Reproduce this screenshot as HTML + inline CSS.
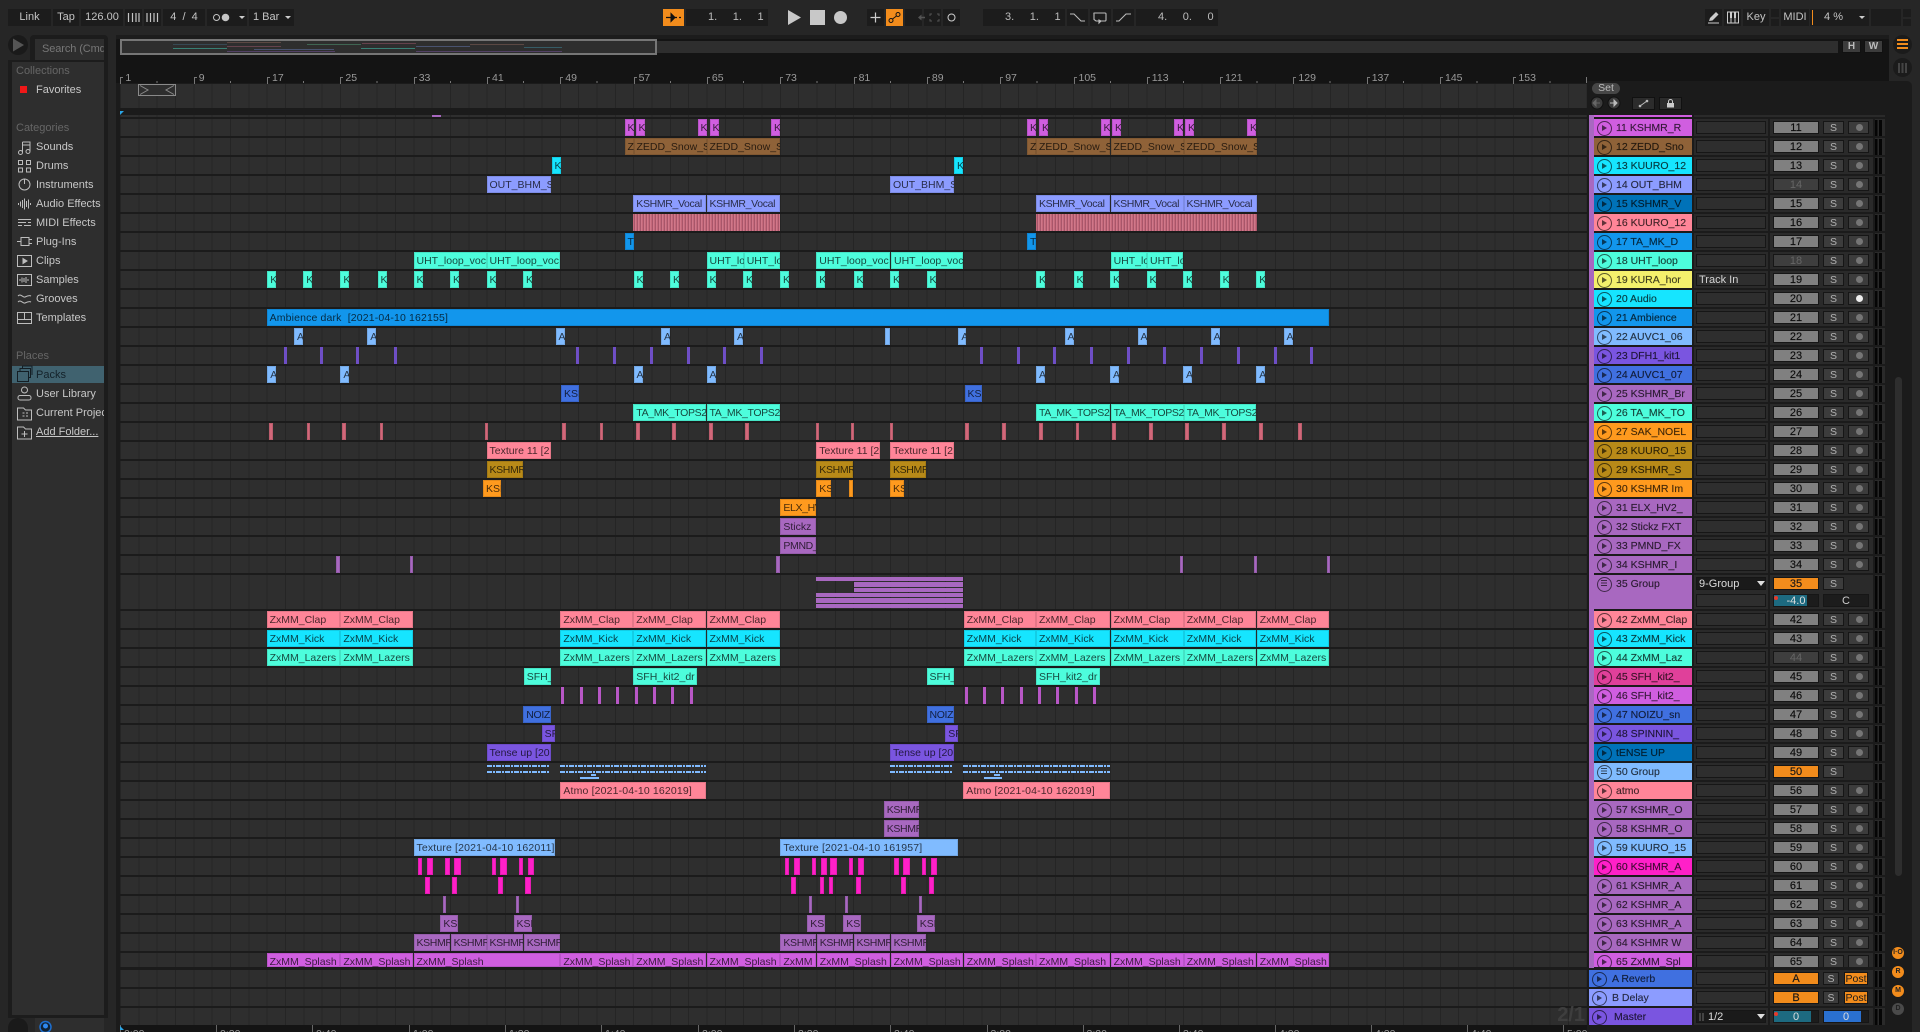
<!DOCTYPE html>
<html><head><meta charset="utf-8"><title>Live Arrangement</title>
<style>
*{margin:0;padding:0;box-sizing:border-box}
html{width:1920px;height:1032px;overflow:hidden;background:#262626}
body{position:relative;width:1920px;height:1032px;overflow:hidden;background:#262626;font-family:"Liberation Sans",sans-serif;font-size:11px;color:#ccc}
div,span,svg{position:absolute}
.tb{top:9px;height:17px;background:#1c1c1c;color:#c4c4c4;text-align:center;line-height:17px;font-size:11px}
.tb.o{background:#f28c1c}
.num{text-align:left;word-spacing:12.5px;color:#bcbcbc;padding-left:22px!important}
.tri{position:absolute;width:0;height:0;border-left:3px solid transparent;border-right:3px solid transparent;border-top:3px solid #ccc;top:7px}
.sb{left:36px;color:#c8c8c8;font-size:11px;line-height:14px;white-space:nowrap}
.sh{left:16px;color:#666;font-size:11px;line-height:14px}
.r{left:120px;width:1467px;height:17px;background:repeating-linear-gradient(90deg,#252525 0,#252525 1px,#2e2e2e 1px,#2e2e2e 18.33px)}
i{position:absolute;top:0;height:100%;overflow:hidden;padding:1px 0 0 3px;font:normal 10.5px/17px "Liberation Sans",sans-serif;color:rgba(0,0,0,.72);white-space:pre;box-shadow:inset 0 0 0 1px rgba(0,0,0,.1)}
.q i{letter-spacing:-.35px}
.dt i{letter-spacing:.15px}
.th i{width:1.5px!important;opacity:.85;box-shadow:none}
.m{background:#d05ee0}.b{background:#8f6238}.c{background:#16e5ff}.v{background:#8c9cff}.s{background:#1296ec}.t{background:#4dfddc}.p{background:#80bbff}.u{background:#7a55e0}.n{background:#4070e0}.k{background:#ff8598}.o{background:#ff9a1e}.g{background:#b88a18}.a{background:#a868c0}.f{background:#ff20c8}.d{background:#0072b8}.y{background:#f4f06c}.e{background:#e0409a}
.tk{background:#d2687a}
.w{background:repeating-linear-gradient(90deg,#c4687a 0,#c4687a 1px,#a8566a 1px,#a8566a 2px,#d0788a 2px,#d0788a 3px);box-shadow:none}
.ds{position:absolute;height:2px;background:repeating-linear-gradient(90deg,#7fbaff 0,#7fbaff 5px,transparent 5px,transparent 6px,#7fbaff 6px,#7fbaff 8px,transparent 8px,transparent 9px)}
.pb{position:absolute;height:4.4px;background:#a868c0;left:696.3px;width:146.7px}
.h{left:1589px;width:296px;height:17px;overflow:hidden;background:linear-gradient(90deg,transparent 105px,#2a2a2a 105px,#2a2a2a 179px,transparent 179px,transparent 181px,#2a2a2a 181px,#2a2a2a 284px,transparent 284px,transparent 286px,#2a2a2a 286px)}
b{position:absolute;left:5px;top:0;width:98px;height:100%;font:normal 10.5px/17px "Liberation Sans",sans-serif;padding:1px 0 0 22px;color:rgba(0,0,0,.72);-webkit-text-stroke:.2px rgba(0,0,0,.5);white-space:pre;overflow:hidden}
b::before{content:"";position:absolute;left:3px;top:2px;width:13px;height:13px;border:1.2px solid rgba(0,0,0,.62);border-radius:50%}
b::after{content:"";position:absolute;left:8px;top:5.5px;width:0;height:0;border-left:5px solid rgba(0,0,0,.62);border-top:3px solid transparent;border-bottom:3px solid transparent}
b.gr::after{left:6.5px;top:5px;width:6px;height:1px;border:0;background:rgba(0,0,0,.62);box-shadow:0 2.5px 0 rgba(0,0,0,.62),0 5px 0 rgba(0,0,0,.62)}
b.x{left:0;width:103px;padding-left:23px}
s{position:absolute;left:107px;top:2px;width:70px;height:13px;background:#2e2e2e;border:1px solid #161616;text-decoration:none;font-size:11px;line-height:12px;padding-left:2px;color:#d4d4d4;white-space:pre}
em{position:absolute;left:184px;top:2px;width:46px;height:13px;background:#808080;border:1px solid #161616;font:normal 11px/12px "Liberation Sans",sans-serif;color:#0c0c0c;text-align:center;-webkit-text-stroke:.15px #0c0c0c}
em.dm{background:#3e3e3e;color:#666;-webkit-text-stroke:0}
em.or{background:#f28c1c;color:#1a1a1a}
u{position:absolute;left:234px;top:2px;width:21px;height:13px;background:#3c3c3c;border:1px solid #161616;text-decoration:none;font-size:10.5px;line-height:12px;color:#b0b0b0;text-align:center}
a{position:absolute;left:259px;top:2px;width:21px;height:13px;background:#3c3c3c;border:1px solid #161616}
a::after{content:"";position:absolute;left:6.5px;top:2px;width:7px;height:7px;border-radius:50%;background:#757575}
a.on::after{background:#eee}
tt{position:absolute;left:286px;top:1px;bottom:0;width:7px;background:linear-gradient(90deg,#050505 0,#050505 2.5px,transparent 2.5px,transparent 4px,#050505 4px,#050505 6.7px)}
.bn{top:73px;color:#9a9a9a;font-size:10.5px;line-height:10px;padding-left:5px}
.bn::before{content:"";position:absolute;left:0;top:4px;width:2px;height:6px;border-left:1px solid #777;border-top:1px solid #777}
.tm{top:1025px;height:7px;overflow:hidden;color:#9a9a9a;font-size:10.5px;line-height:12px;padding:3px 0 0 3px;border-left:1px solid #666}
.ov{height:1px;opacity:.6}
.cb{border-radius:50%}
</style></head><body>

<!-- transport -->
<div class="tb" style="left:8px;width:43px">Link</div>
<div class="tb" style="left:53px;width:26px">Tap</div>
<div class="tb" style="left:81px;width:42px">126.00</div>
<div class="tb" style="left:125px;width:17px"></div>
<div class="tb" style="left:144px;width:17px"></div>
<div class="tb" style="left:163px;width:42px;word-spacing:3px">4 / 4</div>
<div class="tb" style="left:207px;width:40px"><span class="tri" style="left:32px"></span></div>
<div class="tb" style="left:249px;width:45px;text-align:left;padding-left:4px">1 Bar<span class="tri" style="left:36px"></span></div>
<svg style="left:0;top:0" width="300" height="30" fill="none" stroke="#c4c4c4"><path d="M128.5 13v9M132.5 13v9M136 13v9M139 13v9M147 13v9M150.5 13v9M154 13v9M157.5 13v9" stroke-width="1.2"/><circle cx="216.5" cy="17.5" r="3"/><circle cx="225.5" cy="17.5" r="3.3" fill="#c4c4c4"/></svg>

<div class="tb o" style="left:663px;width:21px"></div>
<svg style="left:663px;top:9px" width="21" height="17" fill="none" stroke="#111"><path d="M3 8.5h5M12 8.5h2M16 8.5h2" stroke-width="1.3"/><path d="M8 4.5l4 4-4 4z" fill="#111"/></svg>
<div class="tb num" style="left:686px;width:82px">1. 1. 1</div>
<svg style="left:780px;top:5px" width="190" height="24"><path d="M8 5l13 7.5L8 20z" fill="#c8c8c8"/><rect x="30" y="5" width="15" height="15" fill="#c8c8c8"/><circle cx="60.5" cy="12.5" r="6.5" fill="#c8c8c8"/></svg>
<div class="tb" style="left:867px;width:17px"></div>
<div class="tb o" style="left:886px;width:17px"></div>
<div class="tb" style="left:905px;width:17px"></div>
<div class="tb" style="left:924px;width:17px"></div>
<div class="tb" style="left:943px;width:17px"></div>
<svg style="left:860px;top:9px" width="110" height="17" fill="none"><path d="M15.500 3.500v10M10.500 8.500h10" stroke="#ccc" stroke-width="1.2"/><g stroke="#111"><circle cx="31" cy="11.500" r="2"/><circle cx="38" cy="5.500" r="2"/><path d="M32.500 10l4-3"/></g><path d="M59 8.500h6" stroke="#555" stroke-width="1.5"/><path d="M58 8.500l3.500-3v6z" fill="#555"/><path d="M69 7V5h2M76 5h2v2M78 10v2h-2M71 12h-2v-2" stroke="#555" transform="translate(1)"/><circle cx="91.500" cy="8.500" r="3.500" stroke="#ccc" stroke-width="1"/></svg>
<div class="tb num" style="left:983px;width:82px">3. 1. 1</div>
<div class="tb" style="left:1067px;width:21px"></div>
<div class="tb" style="left:1090px;width:21px"></div>
<div class="tb" style="left:1113px;width:21px"></div>
<svg style="left:1067px;top:9px" width="70" height="17" fill="none" stroke="#bbb" stroke-width="1.100"><path d="M3 5h4l7 7h4"/><path d="M27 4h11a1 1 0 0 1 1 1v6a1 1 0 0 1-1 1h-9l-2-1.500V5a1 1 0 0 1 0-1z"/><path d="M34 12l-2 2v-3z" fill="#bbb"/><path d="M49 12h3l7-7h5"/></svg>
<div class="tb num" style="left:1136px;width:82px">4. 0. 0</div>

<div class="tb" style="left:1705px;width:17px"></div>
<div class="tb" style="left:1724px;width:17px"></div>
<svg style="left:1705px;top:9px" width="37" height="17"><path d="M4 12l1-3 6-6 2.500 2.500-6 6z" fill="#ccc"/><path d="M3 14h11" stroke="#ccc"/><rect x="22.500" y="3" width="11" height="11" fill="none" stroke="#ccc"/><path d="M26 3v11M30 3v11" stroke="#ccc"/><path d="M25 3h2v6h-2zM29 3h2v6h-2z" fill="#ccc"/></svg>
<div class="tb" style="left:1743px;width:26px">Key</div>
<div class="tb" style="left:1771px;width:8px;height:7.500px"></div>
<div class="tb" style="left:1771px;top:18.500px;width:8px;height:7.500px"></div>
<div class="tb" style="left:1781px;width:28px">MIDI</div>
<div class="tb" style="left:1810px;width:59px;padding-right:12px">4 %<span style="left:2px;top:1px;width:1px;height:15px;background:#f28c1c"></span><span class="tri" style="left:49px"></span></div>
<div class="tb" style="left:1871px;width:30px"></div>
<div class="tb" style="left:1903px;width:8px;height:7.500px"></div>
<div class="tb" style="left:1903px;top:18.500px;width:8px;height:7.500px"></div>

<!-- left column -->
<div style="left:8px;top:35px;width:20px;height:20px;border-radius:50%;background:#1a1a1a"></div>
<svg style="left:8px;top:35px" width="20" height="20"><path d="M5 3.500l11 6.500L5 16.500z" fill="#555"/></svg>
<div style="left:30px;top:35px;width:78px;height:27px;background:#1c1c1c;border-radius:4px 4px 0 0"></div>
<div style="left:35px;top:39px;width:69px;height:21px;background:#2e2e2e;color:#777;line-height:21px;padding-left:7px;overflow:hidden;white-space:pre;letter-spacing:-.1px">Search (Cmd + F)</div>
<div style="left:8px;top:60px;width:100px;height:958px;background:#1c1c1c"></div>
<div style="left:12px;top:62px;width:92px;height:953px;background:#2e2e2e"></div>
<div style="left:8px;top:1018px;width:20px;height:14px;border-radius:10px 10px 0 0;background:#1a1a1a"></div>
<div style="left:35px;top:1018px;width:69px;height:14px;background:#2e2e2e"></div>
<svg style="left:38px;top:1020px" width="16" height="12"><circle cx="7.500" cy="7" r="5.500" fill="#123" stroke="#1d6fd0" stroke-width="1.500"/><circle cx="7.500" cy="6" r="2.500" fill="#2e88ee"/></svg>
<div class="sh" style="top:64px">Collections</div>
<div style="left:20px;top:86px;width:7px;height:7px;background:#f01818"></div>
<div class="sb" style="top:83px">Favorites</div>
<div class="sh" style="top:121px">Categories</div>
<div class="sb" style="top:140px">Sounds</div>
<div class="sb" style="top:159px">Drums</div>
<div class="sb" style="top:178px">Instruments</div>
<div class="sb" style="top:197px">Audio Effects</div>
<div class="sb" style="top:216px">MIDI Effects</div>
<div class="sb" style="top:235px">Plug-Ins</div>
<div class="sb" style="top:254px">Clips</div>
<div class="sb" style="top:273px">Samples</div>
<div class="sb" style="top:292px">Grooves</div>
<div class="sb" style="top:311px">Templates</div>
<div class="sh" style="top:349px">Places</div>
<div style="left:12px;top:366px;width:92px;height:17px;background:#40626f"></div>
<div class="sb" style="top:368px;color:#14222a">Packs</div>
<div class="sb" style="top:387px">User Library</div>
<div class="sb" style="top:406px;width:68px;overflow:hidden">Current Project</div>
<div class="sb" style="top:425px;text-decoration:underline">Add Folder...</div>
<svg style="left:0;top:0" width="110" height="450" fill="none" stroke="#bdbdbd" stroke-width="1">
<path d="M22.500 142h7.500v9M22.500 142v10M22.500 145h7.500"/><circle cx="20.500" cy="152.500" r="2"/><circle cx="28" cy="151.500" r="2"/>
<path d="M18.500 160.500h4v4h-4zM26.500 160.500h4v4h-4zM18.500 168h4v4h-4zM26.500 168h4v4h-4z"/>
<circle cx="24.500" cy="184.500" r="5.500"/><path d="M24.500 179v5"/>
<path d="M18.500 203v2M20.500 201.500v5M22.500 200v8M24.500 198.500v11M26.500 201v6M28.500 199.500v9M30.500 203v2"/>
<path d="M18 219.500h13M18 222.500h8M28 222.500h3M18 225.500h4M24 225.500h7"/>
<path d="M17 241.500h4M21 237.500h8v8h-8zM29 239.500h3M29 243.500h3"/>
<rect x="17.500" y="255.500" width="14" height="11"/><path d="M23 258.500l4 2.500-4 2.500z" fill="#bdbdbd"/>
<rect x="17.500" y="274.500" width="14" height="11"/><path d="M20 279v2M22 277.500v5M24 278v4M26 277v6M28 279v2"/>
<path d="M18 296c3-3 5 2 7 1s4-2 6-1M18 302c3-3 5 2 7 1s4-2 6-1"/>
<rect x="17.500" y="312.500" width="14" height="11"/><path d="M17.500 319.500h14M24.500 312.500v7"/>
<rect x="17.500" y="371.500" width="11" height="10" stroke="#141e24"/><path d="M20 371v-2.500h10.500v9H29M22.500 368v-2h9.500v9" stroke="#141e24"/>
<circle cx="24.500" cy="390" r="3"/><rect x="18" y="395.500" width="13" height="4.500" rx="2"/>
<path d="M17.500 410v-2h6l2 2h6v10h-14z"/><path d="M22.500 413h2M26 413h2M22.500 416h2M26 416h2"/>
<path d="M17.500 429v-2h6l2 2h6v10h-14z"/><path d="M24.500 431v6M21.500 434h6"/>
</svg>

<!-- main panel -->
<div style="left:116px;top:35px;width:1773px;height:48px;background:#141414;border-radius:5px 5px 0 0"></div>
<div style="left:1587px;top:81px;width:325px;height:951px;background:#1b1b1b;border-radius:0 5px 0 0"></div>
<div style="left:116px;top:83px;width:1471px;height:949px;background:#1b1b1b"></div>
<div style="left:116px;top:35px;width:1773px;height:4px;background:#1c1c1c"></div>
<div style="left:120px;top:41px;width:1718px;height:12px;background:#2e2e2e"></div>
<div class="ov" style="left:173px;top:48px;width:54px;background:#3fb8a4"></div>
<div class="ov" style="left:173px;top:44px;width:54px;background:#3c5c6c"></div>
<div class="ov" style="left:227px;top:42px;width:54px;background:#7a5a52"></div>
<div class="ov" style="left:227px;top:46px;width:54px;background:#8a5060"></div>
<div class="ov" style="left:227px;top:51px;width:108px;background:#6c4e8c"></div>
<div class="ov" style="left:254px;top:49px;width:80px;background:#5c6c9c"></div>
<div class="ov" style="left:307px;top:44px;width:54px;background:#4b8a6a"></div>
<div class="ov" style="left:361px;top:48px;width:54px;background:#3fb8a4"></div>
<div class="ov" style="left:362px;top:43px;width:54px;background:#8a5060"></div>
<div class="ov" style="left:416px;top:46px;width:54px;background:#5c6c9c"></div>
<div class="ov" style="left:416px;top:51px;width:146px;background:#6c4e8c"></div>
<div class="ov" style="left:470px;top:44px;width:54px;background:#7a5a52"></div>
<div class="ov" style="left:524px;top:47px;width:38px;background:#3c7c8c"></div>
<div style="left:120px;top:39px;width:537px;height:16px;border:2px solid #767676"></div>
<div style="left:1842px;top:40px;width:19px;height:13px;background:#3c3c3c;border:1px solid #111;color:#bbb;font-weight:bold;font-size:10px;line-height:11px;text-align:center">H</div>
<div style="left:1864px;top:40px;width:19px;height:13px;background:#3c3c3c;border:1px solid #111;color:#bbb;font-weight:bold;font-size:10px;line-height:11px;text-align:center">W</div>
<div class="cb" style="left:1893px;top:35px;width:19px;height:19px;background:#1b1b1b"></div>
<div style="left:1897px;top:39px;width:11px;height:2px;background:#f28c1c;box-shadow:0 4px 0 #f28c1c,0 8px 0 #f28c1c"></div>
<div class="cb" style="left:1893px;top:58px;width:19px;height:19px;background:#1b1b1b"></div>
<div style="left:1898px;top:63px;width:2px;height:10px;background:#444;box-shadow:3.500px 0 0 #444,7px 0 0 #444"></div>

<!-- bar ruler -->
<span class="bn" style="left:120.400px">1</span><span class="bn" style="left:193.700px">9</span><span class="bn" style="left:267px">17</span><span class="bn" style="left:340.400px">25</span><span class="bn" style="left:413.700px">33</span><span class="bn" style="left:487px">41</span><span class="bn" style="left:560.300px">49</span><span class="bn" style="left:633.600px">57</span><span class="bn" style="left:706.900px">65</span><span class="bn" style="left:780.200px">73</span><span class="bn" style="left:853.600px">81</span><span class="bn" style="left:926.900px">89</span><span class="bn" style="left:1000.200px">97</span><span class="bn" style="left:1073.500px">105</span><span class="bn" style="left:1146.800px">113</span><span class="bn" style="left:1220.100px">121</span><span class="bn" style="left:1293.400px">129</span><span class="bn" style="left:1366.700px">137</span><span class="bn" style="left:1440px">145</span><span class="bn" style="left:1513.400px">153</span>
<div style="left:120px;top:81px;width:1467px;height:2px;background:repeating-linear-gradient(90deg,transparent 0,transparent 36.600px,#777 36.600px,#777 37.600px,transparent 37.600px,transparent 73.320px)"></div>
<div style="left:1586px;top:77px;width:1px;height:6px;background:#777"></div>
<div class="r" style="top:84px;height:24px"></div>
<svg style="left:138px;top:84px" width="39" height="12" fill="none" stroke="#8a8a8a"><rect x=".5" y=".5" width="37" height="11" fill="#2e2e2e"/><path d="M2 1.500l8 4.500-8 4.500M36 1.500l-8 4.500 8 4.500"/></svg>
<svg style="left:120px;top:111px" width="6" height="6"><path d="M0 0h4L0 4z" fill="#2aa6e8"/></svg>
<div class="r" style="top:115px;height:2px"></div>
<div style="left:432px;top:115px;width:9px;height:2px;background:#a868c0"></div>

<!-- rows -->
<div class="r" style="top:119px"><i class="m" style="left:504.500px;width:9px">K</i><i class="m" style="left:515.500px;width:9px">K</i><i class="m" style="left:577.500px;width:9px">K</i><i class="m" style="left:589.500px;width:9px">K</i><i class="m" style="left:651px;width:9px">K</i><i class="m" style="left:907px;width:9px">K</i><i class="m" style="left:919px;width:9px">K</i><i class="m" style="left:980.500px;width:9px">K</i><i class="m" style="left:992px;width:9px">K</i><i class="m" style="left:1054px;width:9px">K</i><i class="m" style="left:1065px;width:9px">K</i><i class="m" style="left:1127px;width:9px">K</i></div>
<div class="r" style="top:138px"><i class="b" style="left:504.500px;width:9px">Z</i><i class="b" style="left:513.500px;width:73px">ZEDD_Snow_S</i><i class="b" style="left:586.500px;width:73px">ZEDD_Snow_S</i><i class="b" style="left:907px;width:9px">Z</i><i class="b" style="left:916px;width:74px">ZEDD_Snow_S</i><i class="b" style="left:990.500px;width:73px">ZEDD_Snow_S</i><i class="b" style="left:1063.500px;width:73px">ZEDD_Snow_S</i></div>
<div class="r" style="top:157px"><i class="c" style="left:431.500px;width:9px">K</i><i class="c" style="left:834px;width:9px">K</i></div>
<div class="r" style="top:176px"><i class="v" style="left:366.500px;width:64.500px">OUT_BHM_S</i><i class="v" style="left:770px;width:64px">OUT_BHM_S</i></div>
<div class="r q" style="top:195px"><i class="v" style="left:513.300px;width:73px">KSHMR_Vocal</i><i class="v" style="left:586.500px;width:73px">KSHMR_Vocal</i><i class="v" style="left:916px;width:74px">KSHMR_Vocal</i><i class="v" style="left:990.500px;width:73px">KSHMR_Vocal</i><i class="v" style="left:1063.500px;width:73px">KSHMR_Vocal</i></div>
<div class="r" style="top:214px"><i class="w" style="left:513.300px;width:146.700px"></i><i class="w" style="left:916px;width:220.500px"></i></div>
<div class="r" style="top:233px"><i class="s" style="left:504.500px;width:9px">T</i><i class="s" style="left:907px;width:9px">T</i></div>
<div class="r" style="top:252px"><i class="t" style="left:293.500px;width:73px">UHT_loop_voc</i><i class="t" style="left:366.500px;width:73.500px">UHT_loop_voc</i><i class="t" style="left:586.500px;width:37px">UHT_lo</i><i class="t" style="left:623.700px;width:36.300px">UHT_lo</i><i class="t" style="left:696.300px;width:73.800px">UHT_loop_voc</i><i class="t" style="left:771px;width:72px">UHT_loop_voc</i><i class="t" style="left:990.600px;width:36.400px">UHT_lo</i><i class="t" style="left:1027px;width:36px">UHT_lo</i></div>
<div class="r" style="top:271px"><i class="t" style="left:147.300px;width:9px">K</i><i class="t" style="left:183.300px;width:9px">K</i><i class="t" style="left:220.400px;width:9px">K</i><i class="t" style="left:257.500px;width:9px">K</i><i class="t" style="left:293.500px;width:9px">K</i><i class="t" style="left:330px;width:9px">K</i><i class="t" style="left:366.500px;width:9px">K</i><i class="t" style="left:403px;width:9px">K</i><i class="t" style="left:513.500px;width:9px">K</i><i class="t" style="left:550px;width:9px">K</i><i class="t" style="left:586.500px;width:9px">K</i><i class="t" style="left:623px;width:9px">K</i><i class="t" style="left:660px;width:9px">K</i><i class="t" style="left:696.300px;width:9px">K</i><i class="t" style="left:733.500px;width:9px">K</i><i class="t" style="left:770px;width:9px">K</i><i class="t" style="left:806.500px;width:9px">K</i><i class="t" style="left:916px;width:9px">K</i><i class="t" style="left:953.500px;width:9px">K</i><i class="t" style="left:990px;width:9px">K</i><i class="t" style="left:1026.500px;width:9px">K</i><i class="t" style="left:1063px;width:9px">K</i><i class="t" style="left:1099.600px;width:9px">K</i><i class="t" style="left:1136.300px;width:9px">K</i></div>
<div class="r" style="top:290px"></div>
<div class="r dt" style="top:309px"><i class="s" style="left:146.600px;width:1062px">Ambience dark  [2021-04-10 162155]</i></div>
<div class="r" style="top:328px"><i class="p" style="left:174px;width:9px">A</i><i class="p" style="left:247.300px;width:9px">A</i><i class="p" style="left:435.500px;width:9px">A</i><i class="p" style="left:541px;width:9px">A</i><i class="p" style="left:614px;width:9px">A</i><i class="p" style="left:765.300px;width:4.500px"></i><i class="p" style="left:838.400px;width:8px">A</i><i class="p" style="left:944.500px;width:9px">A</i><i class="p" style="left:1017.500px;width:9px">A</i><i class="p" style="left:1090.600px;width:9px">A</i><i class="p" style="left:1163.500px;width:9px">A</i></div>
<div class="r th" style="top:347px"><i class="u" style="left:163.700px;width:2px"></i><i class="u" style="left:200px;width:2px"></i><i class="u" style="left:236.300px;width:2px"></i><i class="u" style="left:274px;width:2px"></i><i class="u" style="left:456.300px;width:1px"></i><i class="u" style="left:493px;width:2px"></i><i class="u" style="left:529.800px;width:2px"></i><i class="u" style="left:567px;width:2px"></i><i class="u" style="left:603px;width:2px"></i><i class="u" style="left:640px;width:2px"></i><i class="u" style="left:859.600px;width:1px"></i><i class="u" style="left:896.700px;width:2px"></i><i class="u" style="left:933px;width:2px"></i><i class="u" style="left:970px;width:2px"></i><i class="u" style="left:1007px;width:2px"></i><i class="u" style="left:1043px;width:2px"></i><i class="u" style="left:1080px;width:2px"></i><i class="u" style="left:1116.700px;width:2px"></i><i class="u" style="left:1153.500px;width:2px"></i><i class="u" style="left:1190px;width:2px"></i></div>
<div class="r" style="top:366px"><i class="p" style="left:147.300px;width:9px">A</i><i class="p" style="left:220.400px;width:9px">A</i><i class="p" style="left:513.500px;width:9px">A</i><i class="p" style="left:586.500px;width:9px">A</i><i class="p" style="left:916px;width:9px">A</i><i class="p" style="left:990px;width:9px">A</i><i class="p" style="left:1063px;width:9px">A</i><i class="p" style="left:1136.300px;width:9px">A</i></div>
<div class="r" style="top:385px"><i class="n" style="left:441px;width:18px">KSH</i><i class="n" style="left:844.500px;width:17.500px">KSH</i></div>
<div class="r q" style="top:404px"><i class="t" style="left:513.300px;width:73px">TA_MK_TOPS2</i><i class="t" style="left:586.500px;width:73px">TA_MK_TOPS2</i><i class="t" style="left:916px;width:74px">TA_MK_TOPS2</i><i class="t" style="left:990.600px;width:73px">TA_MK_TOPS2</i><i class="t" style="left:1063.700px;width:72.500px">TA_MK_TOPS2</i></div>
<div class="r" style="top:423px"><i class="tk" style="left:149.400px;width:3.700px"></i><i class="tk" style="left:186.500px;width:3.300px"></i><i class="tk" style="left:222.400px;width:3.700px"></i><i class="tk" style="left:259.600px;width:3.300px"></i><i class="tk" style="left:364.500px;width:3.700px"></i><i class="tk" style="left:442.400px;width:3.700px"></i><i class="tk" style="left:479.600px;width:3.300px"></i><i class="tk" style="left:515.500px;width:4px"></i><i class="tk" style="left:552.200px;width:3.700px"></i><i class="tk" style="left:589.400px;width:3.700px"></i><i class="tk" style="left:625.300px;width:3.700px"></i><i class="tk" style="left:696.300px;width:1.600px"></i><i class="tk" style="left:731.400px;width:1.300px"></i><i class="tk" style="left:770.200px;width:1px"></i><i class="tk" style="left:845.300px;width:3.700px"></i><i class="tk" style="left:882.400px;width:3.700px"></i><i class="tk" style="left:919px;width:3.700px"></i><i class="tk" style="left:955.500px;width:3.700px"></i><i class="tk" style="left:992.200px;width:3.700px"></i><i class="tk" style="left:1029px;width:4px"></i><i class="tk" style="left:1065.300px;width:3.700px"></i><i class="tk" style="left:1102.400px;width:3.700px"></i><i class="tk" style="left:1138.800px;width:4px"></i><i class="tk" style="left:1178px;width:3.700px"></i></div>
<div class="r" style="top:442px"><i class="k" style="left:366.500px;width:64.500px">Texture 11 [2</i><i class="k" style="left:696.300px;width:63.700px">Texture 11 [2</i><i class="k" style="left:770px;width:64px">Texture 11 [2</i></div>
<div class="r q" style="top:461px"><i class="g" style="left:366.500px;width:36.300px">KSHMR</i><i class="g" style="left:696.300px;width:36.700px">KSHMR</i><i class="g" style="left:770px;width:36px">KSHMR</i></div>
<div class="r" style="top:480px"><i class="o" style="left:363px;width:17.800px">KSH</i><i class="o" style="left:696.300px;width:14.700px">KS</i><i class="o" style="left:729.400px;width:3.600px"></i><i class="o" style="left:770px;width:14px">KS</i></div>
<div class="r q" style="top:499px"><i class="o" style="left:660.400px;width:35.600px">ELX_HV</i></div>
<div class="r" style="top:518px"><i class="a" style="left:660.400px;width:35.600px">Stickz</i></div>
<div class="r q" style="top:537px"><i class="a" style="left:660.400px;width:35.600px">PMND_</i></div>
<div class="r" style="top:556px"><i class="a" style="left:216.300px;width:3.300px"></i><i class="a" style="left:290.200px;width:2.800px"></i><i class="a" style="left:656.300px;width:3.600px"></i><i class="a" style="left:1059.600px;width:3px"></i><i class="a" style="left:1133.500px;width:2.500px"></i><i class="a" style="left:1207px;width:2.500px"></i></div>
<div class="r" style="top:575px;height:34px"><div class="pb" style="top:2px"></div><div class="pb" style="top:7.300px;left:733.500px;width:109.500px"></div><div class="pb" style="top:12.700px;left:733.500px;width:109.500px"></div><div class="pb" style="top:18px"></div><div class="pb" style="top:23.300px"></div><div class="pb" style="top:28.700px"></div></div>
<div class="r" style="top:611px"><i class="k" style="left:146.600px;width:73.300px">ZxMM_Clap</i><i class="k" style="left:220.400px;width:72.700px">ZxMM_Clap</i><i class="k" style="left:440.400px;width:72.900px">ZxMM_Clap</i><i class="k" style="left:513.300px;width:73px">ZxMM_Clap</i><i class="k" style="left:586.500px;width:73.300px">ZxMM_Clap</i><i class="k" style="left:843.700px;width:72.300px">ZxMM_Clap</i><i class="k" style="left:916px;width:74px">ZxMM_Clap</i><i class="k" style="left:990.600px;width:73px">ZxMM_Clap</i><i class="k" style="left:1063.700px;width:72.500px">ZxMM_Clap</i><i class="k" style="left:1136.700px;width:72px">ZxMM_Clap</i></div>
<div class="r" style="top:630px"><i class="c" style="left:146.600px;width:73.300px">ZxMM_Kick</i><i class="c" style="left:220.400px;width:72.700px">ZxMM_Kick</i><i class="c" style="left:440.400px;width:72.900px">ZxMM_Kick</i><i class="c" style="left:513.300px;width:73px">ZxMM_Kick</i><i class="c" style="left:586.500px;width:73.300px">ZxMM_Kick</i><i class="c" style="left:843.700px;width:72.300px">ZxMM_Kick</i><i class="c" style="left:916px;width:74px">ZxMM_Kick</i><i class="c" style="left:990.600px;width:73px">ZxMM_Kick</i><i class="c" style="left:1063.700px;width:72.500px">ZxMM_Kick</i><i class="c" style="left:1136.700px;width:72px">ZxMM_Kick</i></div>
<div class="r" style="top:649px"><i class="t" style="left:146.600px;width:73.300px">ZxMM_Lazers</i><i class="t" style="left:220.400px;width:72.700px">ZxMM_Lazers</i><i class="t" style="left:440.400px;width:72.900px">ZxMM_Lazers</i><i class="t" style="left:513.300px;width:73px">ZxMM_Lazers</i><i class="t" style="left:586.500px;width:73.300px">ZxMM_Lazers</i><i class="t" style="left:843.700px;width:72.300px">ZxMM_Lazers</i><i class="t" style="left:916px;width:74px">ZxMM_Lazers</i><i class="t" style="left:990.600px;width:73px">ZxMM_Lazers</i><i class="t" style="left:1063.700px;width:72.500px">ZxMM_Lazers</i><i class="t" style="left:1136.700px;width:72px">ZxMM_Lazers</i></div>
<div class="r" style="top:668px"><i class="t" style="left:403.700px;width:27.300px">SFH_</i><i class="t" style="left:513.300px;width:63.700px">SFH_kit2_dr</i><i class="t" style="left:806.500px;width:27.500px">SFH_</i><i class="t" style="left:916px;width:64px">SFH_kit2_dr</i></div>
<div class="r th" style="top:687px"><i class="m" style="left:441px;width:2px"></i><i class="m" style="left:459.600px;width:2px"></i><i class="m" style="left:478px;width:2px"></i><i class="m" style="left:496.300px;width:2px"></i><i class="m" style="left:514.700px;width:2px"></i><i class="m" style="left:532.700px;width:2px"></i><i class="m" style="left:551.400px;width:2px"></i><i class="m" style="left:569.800px;width:2px"></i><i class="m" style="left:844.500px;width:2px"></i><i class="m" style="left:862.900px;width:2px"></i><i class="m" style="left:880.800px;width:2px"></i><i class="m" style="left:899.600px;width:2px"></i><i class="m" style="left:918px;width:2px"></i><i class="m" style="left:936px;width:2px"></i><i class="m" style="left:954.700px;width:2px"></i><i class="m" style="left:972.700px;width:2px"></i></div>
<div class="r q" style="top:706px"><i class="n" style="left:403.300px;width:27.700px">NOIZ</i><i class="n" style="left:806.500px;width:27.500px">NOIZ</i></div>
<div class="r" style="top:725px"><i class="u" style="left:421.600px;width:13.400px">SP</i><i class="u" style="left:825.300px;width:12.700px">SP</i></div>
<div class="r" style="top:744px"><i class="u" style="left:366.500px;width:64.500px">Tense up [20</i><i class="u" style="left:770px;width:64px">Tense up [20</i></div>
<div class="r" style="top:763px"><div class="ds" style="top:2px;left:366.500px;width:63.300px"></div><div class="ds" style="top:8px;left:366.500px;width:63.300px"></div><div class="ds" style="top:2px;left:440.400px;width:145.600px"></div><div class="ds" style="top:8px;left:440.400px;width:145.600px"></div><div class="ds" style="top:2px;left:770px;width:63px"></div><div class="ds" style="top:8px;left:770px;width:63px"></div><div class="ds" style="top:2px;left:842.900px;width:146.900px"></div><div class="ds" style="top:8px;left:842.900px;width:146.900px"></div><div style="left:460px;top:14px;width:19px;height:2px;background:#7fbaff"></div><div style="left:471px;top:11px;width:5px;height:2px;background:#7fbaff"></div><div style="left:864px;top:14px;width:18px;height:2px;background:#7fbaff"></div><div style="left:873.500px;top:11px;width:6.500px;height:2px;background:#7fbaff"></div></div>
<div class="r dt" style="top:782px"><i class="k" style="left:440.400px;width:145.600px">Atmo [2021-04-10 162019]</i><i class="k" style="left:843.300px;width:146.500px">Atmo [2021-04-10 162019]</i></div>
<div class="r q" style="top:801px"><i class="a" style="left:763.700px;width:35.500px">KSHMR</i></div>
<div class="r q" style="top:820px"><i class="a" style="left:763.700px;width:35.500px">KSHMR</i></div>
<div class="r dt" style="top:839px"><i class="p" style="left:293.500px;width:141.700px">Texture [2021-04-10 162011]</i><i class="p" style="left:660.400px;width:177.600px">Texture [2021-04-10 161957]</i></div>
<div class="r" style="top:858px"><i class="f" style="left:298.400px;width:4px"></i><i class="f" style="left:307px;width:6px"></i><i class="f" style="left:325.300px;width:4.500px"></i><i class="f" style="left:333.900px;width:7px"></i><i class="f" style="left:371.800px;width:4px"></i><i class="f" style="left:380px;width:7px"></i><i class="f" style="left:399.200px;width:4px"></i><i class="f" style="left:408.200px;width:6px"></i><i class="f" style="left:664.500px;width:4.500px"></i><i class="f" style="left:673.500px;width:6.500px"></i><i class="f" style="left:692.200px;width:4px"></i><i class="f" style="left:700.800px;width:6px"></i><i class="f" style="left:709.800px;width:7px"></i><i class="f" style="left:728.600px;width:4.500px"></i><i class="f" style="left:738px;width:6px"></i><i class="f" style="left:774.300px;width:5px"></i><i class="f" style="left:782.900px;width:7px"></i><i class="f" style="left:802.400px;width:4px"></i><i class="f" style="left:811.400px;width:6px"></i></div>
<div class="r" style="top:877px"><i class="f" style="left:305.300px;width:4.500px"></i><i class="f" style="left:332.200px;width:5px"></i><i class="f" style="left:378.400px;width:4.500px"></i><i class="f" style="left:405.300px;width:5.700px"></i><i class="f" style="left:671px;width:5px"></i><i class="f" style="left:699.600px;width:4.500px"></i><i class="f" style="left:708.600px;width:4.500px"></i><i class="f" style="left:735.500px;width:5.300px"></i><i class="f" style="left:781.200px;width:5px"></i><i class="f" style="left:809px;width:5px"></i></div>
<div class="r" style="top:896px"><i class="a" style="left:322.900px;width:2px"></i><i class="a" style="left:396px;width:2px"></i><i class="a" style="left:689px;width:2.500px"></i><i class="a" style="left:725.300px;width:2.500px"></i><i class="a" style="left:798.800px;width:2.500px"></i></div>
<div class="r" style="top:915px"><i class="a" style="left:320.400px;width:17.600px">KSH</i><i class="a" style="left:393.500px;width:18.400px">KSH</i><i class="a" style="left:687.300px;width:17.500px">KSH</i><i class="a" style="left:723.300px;width:17.500px">KSH</i><i class="a" style="left:796.700px;width:18.400px">KSH</i></div>
<div class="r q" style="top:934px"><i class="a" style="left:293.500px;width:36.700px">KSHMR</i><i class="a" style="left:330.600px;width:36px">KSHMR</i><i class="a" style="left:366.500px;width:36.700px">KSHMR</i><i class="a" style="left:403.700px;width:36.300px">KSHMR</i><i class="a" style="left:660.400px;width:36px">KSHMR</i><i class="a" style="left:696.700px;width:36.300px">KSHMR</i><i class="a" style="left:733.500px;width:36.300px">KSHMR</i><i class="a" style="left:770.600px;width:35.500px">KSHMR</i></div>
<div class="r" style="top:953px;height:14px"><i class="m" style="left:146.600px;width:73px">ZxMM_Splash</i><i class="m" style="left:220.400px;width:73px">ZxMM_Splash</i><i class="m" style="left:293.500px;width:146.500px">ZxMM_Splash</i><i class="m" style="left:440.400px;width:73px">ZxMM_Splash</i><i class="m" style="left:513.300px;width:73px">ZxMM_Splash</i><i class="m" style="left:586.500px;width:73.300px">ZxMM_Splash</i><i class="m" style="left:660.400px;width:36px">ZxMM</i><i class="m" style="left:696.700px;width:73px">ZxMM_Splash</i><i class="m" style="left:770.600px;width:72px">ZxMM_Splash</i><i class="m" style="left:843.700px;width:72px">ZxMM_Splash</i><i class="m" style="left:916px;width:74px">ZxMM_Splash</i><i class="m" style="left:990.600px;width:73px">ZxMM_Splash</i><i class="m" style="left:1063.700px;width:72.500px">ZxMM_Splash</i><i class="m" style="left:1136.700px;width:72px">ZxMM_Splash</i></div>
<div class="r" style="top:970px"></div>
<div class="r" style="top:989px"></div>
<div class="r" style="top:1008px"></div>
<div style="left:1540px;top:1005px;width:45px;text-align:right;font-size:20px;line-height:20px;font-weight:bold;color:#3e3e3e">2/1</div>

<!-- bottom time ruler -->
<div style="left:120px;top:1025px;width:1467px;height:7px;background:#141414"></div>
<span class="tm" style="left:120px">0:00</span><span class="tm" style="left:216px">0:20</span><span class="tm" style="left:312px">0:40</span><span class="tm" style="left:409px">1:00</span><span class="tm" style="left:505px">1:20</span><span class="tm" style="left:601px">1:40</span><span class="tm" style="left:698px">2:00</span><span class="tm" style="left:794px">2:20</span><span class="tm" style="left:890px">2:40</span><span class="tm" style="left:986.500px">3:00</span><span class="tm" style="left:1082.500px">3:20</span><span class="tm" style="left:1179px">3:40</span><span class="tm" style="left:1275px">4:00</span><span class="tm" style="left:1371px">4:20</span><span class="tm" style="left:1467px">4:40</span><span class="tm" style="left:1563px">5:00</span>
<svg style="left:120px;top:1026px" width="6" height="6"><path d="M0 0l4 4H0z" fill="#2aa6e8"/></svg>

<!-- right header -->
<div style="left:1592px;top:83px;width:28px;height:11px;border-radius:6px;background:#464646;color:#bbb;font-size:10.500px;line-height:11px;text-align:center">Set</div>
<svg style="left:1590px;top:96px" width="96" height="15"><circle cx="7" cy="7" r="6" fill="#3c3c3c" stroke="#111"/><path d="M3 7h7M6 4L3 7l3 3z" stroke="#666" fill="#666"/><circle cx="24" cy="7" r="6" fill="#3c3c3c" stroke="#111"/><path d="M20 7h7M24 4l3 3-3 3z" stroke="#bbb" fill="#bbb"/><rect x="42.500" y="1.500" width="22" height="12" fill="#2c2c2c" stroke="#111"/><path d="M50 10l7-5" stroke="#bbb"/><circle cx="50" cy="10" r="1.300" fill="#bbb"/><circle cx="57" cy="5" r="1.300" fill="#bbb"/><rect x="69.500" y="1.500" width="22" height="12" fill="#2c2c2c" stroke="#111"/><rect x="77" y="7" width="7" height="4.500" fill="#ccc"/><path d="M78.500 7V5.500a2 2 0 0 1 4 0V7" stroke="#ccc" fill="none"/></svg>

<!-- mixer -->
<div style="left:1589px;top:115px;width:4.500px;height:853px;background:#a868c0"></div>
<div style="left:1594px;top:115px;width:98px;height:2px;background:#d05ee0"></div>
<div style="left:1694px;top:115px;width:191px;height:2px;background:#2a2a2a"></div>

<div class="h" style="top:119px"><b class="m">11 KSHMR_R</b><s></s><em>11</em><u>S</u><a></a><tt></tt></div>
<div class="h" style="top:138px"><b class="b">12 ZEDD_Sno</b><s></s><em>12</em><u>S</u><a></a><tt></tt></div>
<div class="h" style="top:157px"><b class="c">13 KUURO_12</b><s></s><em>13</em><u>S</u><a></a><tt></tt></div>
<div class="h" style="top:176px"><b class="v">14 OUT_BHM</b><s></s><em class="dm">14</em><u>S</u><a></a><tt></tt></div>
<div class="h" style="top:195px"><b class="d">15 KSHMR_V</b><s></s><em>15</em><u>S</u><a></a><tt></tt></div>
<div class="h" style="top:214px"><b class="k">16 KUURO_12</b><s></s><em>16</em><u>S</u><a></a><tt></tt></div>
<div class="h" style="top:233px"><b class="s">17 TA_MK_D</b><s></s><em>17</em><u>S</u><a></a><tt></tt></div>
<div class="h" style="top:252px"><b class="t">18 UHT_loop</b><s></s><em class="dm">18</em><u>S</u><a></a><tt></tt></div>
<div class="h" style="top:271px"><b class="y">19 KURA_hor</b><s>Track In</s><em>19</em><u>S</u><a></a><tt></tt></div>
<div class="h" style="top:290px"><b class="c">20 Audio</b><s></s><em>20</em><u>S</u><a class="on"></a><tt></tt></div>
<div class="h" style="top:309px"><b class="s">21 Ambience</b><s></s><em>21</em><u>S</u><a></a><tt></tt></div>
<div class="h" style="top:328px"><b class="p">22 AUVC1_06</b><s></s><em>22</em><u>S</u><a></a><tt></tt></div>
<div class="h" style="top:347px"><b class="u">23 DFH1_kit1</b><s></s><em>23</em><u>S</u><a></a><tt></tt></div>
<div class="h" style="top:366px"><b class="n">24 AUVC1_07</b><s></s><em>24</em><u>S</u><a></a><tt></tt></div>
<div class="h" style="top:385px"><b class="a">25 KSHMR_Br</b><s></s><em>25</em><u>S</u><a></a><tt></tt></div>
<div class="h" style="top:404px"><b class="t">26 TA_MK_TO</b><s></s><em>26</em><u>S</u><a></a><tt></tt></div>
<div class="h" style="top:423px"><b class="o">27 SAK_NOEL</b><s></s><em>27</em><u>S</u><a></a><tt></tt></div>
<div class="h" style="top:442px"><b class="g">28 KUURO_15</b><s></s><em>28</em><u>S</u><a></a><tt></tt></div>
<div class="h" style="top:461px"><b class="g">29 KSHMR_S</b><s></s><em>29</em><u>S</u><a></a><tt></tt></div>
<div class="h" style="top:480px"><b class="o">30 KSHMR Im</b><s></s><em>30</em><u>S</u><a></a><tt></tt></div>
<div class="h" style="top:499px"><b class="a">31 ELX_HV2_</b><s></s><em>31</em><u>S</u><a></a><tt></tt></div>
<div class="h" style="top:518px"><b class="a">32 Stickz FXT</b><s></s><em>32</em><u>S</u><a></a><tt></tt></div>
<div class="h" style="top:537px"><b class="a">33 PMND_FX</b><s></s><em>33</em><u>S</u><a></a><tt></tt></div>
<div class="h" style="top:556px"><b class="a">34 KSHMR_I</b><s></s><em>34</em><u>S</u><a></a><tt></tt></div>
<div class="h" style="top:575px;height:34px"><b class="a gr">35 Group</b>
<s style="background:#1a1a1a;color:#ddd">9-Group<span class="tri" style="left:60px;top:3px;border-left-width:4px;border-right-width:4px;border-top:5px solid #ddd"></span></s><s style="top:19px"></s>
<em class="or">35</em><u>S</u>
<div style="left:184px;top:19px;width:46px;height:13px;background:#1c1c1c;border:1px solid #161616"></div>
<div style="left:185px;top:20px;width:33px;height:11px;background:#1d6a80"></div>
<div style="left:185px;top:20px;width:44px;height:11px;text-align:center;line-height:12px;color:#ddd;font-size:11px">-4.0</div>
<div style="left:185px;top:20.500px;width:4px;height:4px;border-radius:50%;background:#e63a2a"></div>
<div style="left:234px;top:19px;width:46px;height:13px;background:#1c1c1c;border:1px solid #161616;text-align:center;line-height:12px;color:#ccc">C</div><tt></tt></div>
<div class="h" style="top:611px"><b class="k">42 ZxMM_Clap</b><s></s><em>42</em><u>S</u><a></a><tt></tt></div>
<div class="h" style="top:630px"><b class="c">43 ZxMM_Kick</b><s></s><em>43</em><u>S</u><a></a><tt></tt></div>
<div class="h" style="top:649px"><b class="t">44 ZxMM_Laz</b><s></s><em class="dm">44</em><u>S</u><a></a><tt></tt></div>
<div class="h" style="top:668px"><b class="e">45 SFH_kit2_</b><s></s><em>45</em><u>S</u><a></a><tt></tt></div>
<div class="h" style="top:687px"><b class="m">46 SFH_kit2_</b><s></s><em>46</em><u>S</u><a></a><tt></tt></div>
<div class="h" style="top:706px"><b class="n">47 NOIZU_sn</b><s></s><em>47</em><u>S</u><a></a><tt></tt></div>
<div class="h" style="top:725px"><b class="u">48 SPINNIN_</b><s></s><em>48</em><u>S</u><a></a><tt></tt></div>
<div class="h" style="top:744px"><b class="d">tENSE UP</b><s></s><em>49</em><u>S</u><a></a><tt></tt></div>
<div class="h" style="top:763px"><b class="p gr">50 Group</b><s></s><em class="or">50</em><u>S</u><tt></tt></div>
<div class="h" style="top:782px"><b class="k">atmo</b><s></s><em>56</em><u>S</u><a></a><tt></tt></div>
<div class="h" style="top:801px"><b class="a">57 KSHMR_O</b><s></s><em>57</em><u>S</u><a></a><tt></tt></div>
<div class="h" style="top:820px"><b class="a">58 KSHMR_O</b><s></s><em>58</em><u>S</u><a></a><tt></tt></div>
<div class="h" style="top:839px"><b class="p">59 KUURO_15</b><s></s><em>59</em><u>S</u><a></a><tt></tt></div>
<div class="h" style="top:858px"><b class="f">60 KSHMR_A</b><s></s><em>60</em><u>S</u><a></a><tt></tt></div>
<div class="h" style="top:877px"><b class="a">61 KSHMR_A</b><s></s><em>61</em><u>S</u><a></a><tt></tt></div>
<div class="h" style="top:896px"><b class="a">62 KSHMR_A</b><s></s><em>62</em><u>S</u><a></a><tt></tt></div>
<div class="h" style="top:915px"><b class="a">63 KSHMR_A</b><s></s><em>63</em><u>S</u><a></a><tt></tt></div>
<div class="h" style="top:934px"><b class="a">64 KSHMR W</b><s></s><em>64</em><u>S</u><a></a><tt></tt></div>
<div class="h" style="top:953px;height:14px"><b class="m">65 ZxMM_Spl</b><s></s><em>65</em><u>S</u><a></a><tt></tt></div>

<div class="h" style="top:970px"><b class="n x">A Reverb</b><s></s><em class="or">A</em><u style="width:16px">S</u><div style="left:255px;top:2px;width:24px;height:13px;background:#f28c1c;border:1px solid #161616;color:#1a1a1a;font-size:10.500px;line-height:12px;text-align:center">Post</div><tt></tt></div>
<div class="h" style="top:989px"><b class="v x">B Delay</b><s></s><em class="or">B</em><u style="width:16px">S</u><div style="left:255px;top:2px;width:24px;height:13px;background:#f28c1c;border:1px solid #161616;color:#1a1a1a;font-size:10.500px;line-height:12px;text-align:center">Post</div><tt></tt></div>
<div class="h" style="top:1008px"><b class="u x" style="padding-left:25px">Master</b>
<s style="background:#1a1a1a;color:#ddd;padding-left:11px;font-size:11px">1/2<span class="tri" style="left:60px;top:3px;border-left-width:4px;border-right-width:4px;border-top:5px solid #ddd"></span><span style="left:2px;top:2px;width:2px;height:8px;background:#444;box-shadow:3px 0 0 #444"></span></s>
<div style="left:184px;top:2px;width:46px;height:13px;background:#1c1c1c;border:1px solid #161616"></div><div style="left:185px;top:3px;width:37px;height:11px;background:#1d6a80"></div><div style="left:185px;top:3px;width:44px;height:11px;text-align:center;line-height:12px;color:#ddd">0</div><div style="left:185px;top:3.500px;width:4px;height:4px;border-radius:50%;background:#e63a2a"></div>
<div style="left:234px;top:2px;width:46px;height:13px;background:#1c1c1c;border:1px solid #161616"></div><div style="left:235px;top:3px;width:37px;height:11px;background:#2a70d0"></div><div style="left:235px;top:3px;width:44px;height:11px;text-align:center;line-height:12px;color:#ddd">0</div><tt></tt></div>

<!-- scrollbar + side buttons -->
<div style="left:1895px;top:377px;width:7px;height:499px;border-radius:4px;background:#2e2e2e"></div>
<div class="cb" style="left:1892px;top:947px;width:12px;height:12px;background:#f28c1c;color:#222;font-size:7px;line-height:12px;text-align:center;font-weight:bold">I·O</div>
<div class="cb" style="left:1892px;top:966px;width:12px;height:12px;background:#f28c1c;color:#222;font-size:7px;line-height:12px;text-align:center;font-weight:bold">R</div>
<div class="cb" style="left:1892px;top:985px;width:12px;height:12px;background:#f28c1c;color:#222;font-size:7px;line-height:12px;text-align:center;font-weight:bold">M</div>
<div class="cb" style="left:1892px;top:1003px;width:12px;height:12px;background:#4a4a4a;color:#222;font-size:7px;line-height:12px;text-align:center;font-weight:bold">D</div>
</body></html>
